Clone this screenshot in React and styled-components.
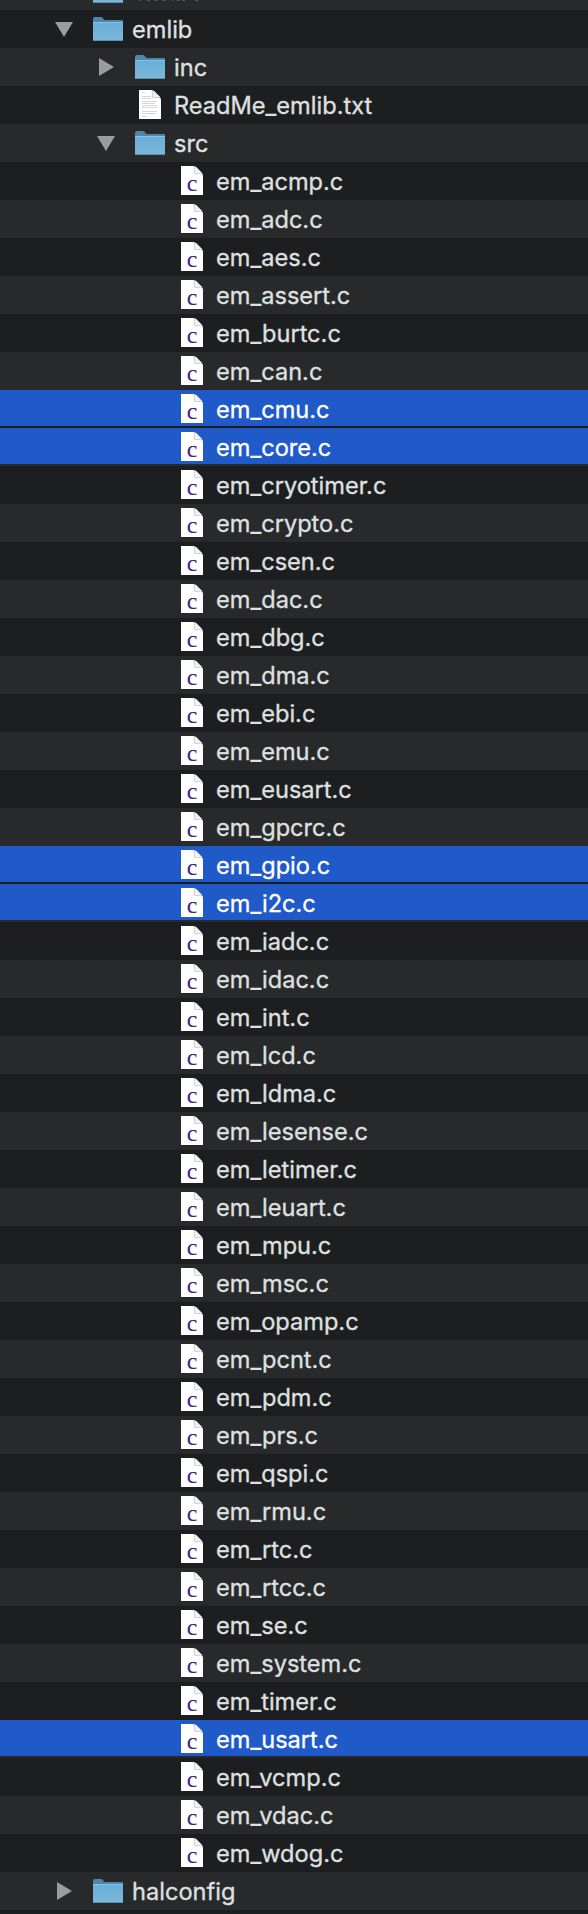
import React from 'react';
import styled, { createGlobalStyle } from 'styled-components';

const Global = createGlobalStyle`
  html, body { margin: 0; background: #1d1e20; }
`;
const Tree = styled.main`
  width: 588px;
  height: 1914px;
  overflow: hidden;
  display: flex;
  flex-direction: column;
  background: #1d1e20;
  font: 400 23.6px/36px Inter, sans-serif;
  color: #dfe0e0;
`;
const Row = styled.div`
  flex: none;
  display: flex;
  align-items: center;
  box-sizing: border-box;
  height: 38px;
  padding-left: ${p => 48 + p.$depth * 42}px;
  border-bottom: 2px solid ${p => (p.$alt ? '#28292b' : '#1d1e20')};
  background: ${p => (p.$selected ? '#1f5ac8' : p.$alt ? '#28292b' : '#1d1e20')};
  color: ${p => (p.$selected ? '#ffffff' : '#dfe0e0')};
`;
const TopSliver = styled.div`
  flex: none;
  height: 10px;
  overflow: hidden;
  display: flex;
  flex-direction: column;
  justify-content: flex-end;
  background: #28292b;
`;
const Disclosure = styled.span`
  width: 34px;
  height: 36px;
  flex: none;
  display: flex;
`;
const IconSlot = styled.span`
  width: 52px;
  height: 36px;
  flex: none;
  display: flex;
  justify-content: center;
  margin-right: -2px;
`;
const Name = styled.span`
  white-space: pre;
  padding-top: 3px;
  -webkit-text-stroke: 0.3px currentColor;
`;

const Triangle = ({ open }) => (
  <svg width="32" height="36" viewBox="0 0 32 36">
    <path d={open ? 'M7 12H25L16 27Z' : 'M9 10V28L24 19Z'} fill="#9b9c9c" />
  </svg>
);
const Folder = () => (
  <svg width="32" height="36" viewBox="0 0 32 36">
    <defs>
      <linearGradient id="front" x1="0" y1="0" x2="0" y2="1">
        <stop offset="0" stopColor="#68aed8" />
        <stop offset="1" stopColor="#7cb8d9" />
      </linearGradient>
    </defs>
    <path d="M1 9Q1 7 3 7H9Q10.500 7 11.500 9L12.500 10H30Q31 10 31 11V20H1Z" fill="#4f86a8" />
    <path d="M1 12H31V30Q31 31 30 31H2Q1 31 1 30Z" fill="url(#front)" />
    <path d="M1 12.500H31" stroke="#83c4e8" />
    <path d="M1.300 30.500H30.700" stroke="#5a92b2" />
  </svg>
);
const Page = ({ code }) => (
  <svg width="24" height="36" viewBox="0 0 24 36">
    <path d="M1 4H13Q15 4 16.500 5.500L21.500 10.500Q23 12 23 14V33H1Z" fill="#fff" />
    <path d="M14.500 4.500V11.500H22.300L16 5Z" fill="#f2f2f2" />
    <path d="M14.500 5V11.500H22" fill="none" stroke="#c9c9c9" strokeWidth=".8" />
    {code ? (
      <text x="12" y="29.200" textAnchor="middle" fontFamily="Liberation Serif, serif" fontSize="24" fill="#3f2382">c</text>
    ) : (
      <path d="M4 6.500H7M4 10.500H13M4 12.500H13M4 15.500H19M4 17.500H17M4 19.500H19M4 21.500H19M4 25.500H19M4 27.500H18M4 30.500H9" stroke="#cccccc" strokeWidth=".8" />
    )}
  </svg>
);

const files = ['acmp','adc','aes','assert','burtc','can','cmu','core','cryotimer','crypto','csen','dac','dbg','dma','ebi','emu','eusart','gpcrc','gpio','i2c','iadc','idac','int','lcd','ldma','lesense','letimer','leuart','mpu','msc','opamp','pcnt','pdm','prs','qspi','rmu','rtc','rtcc','se','system','timer','usart','vcmp','vdac','wdog'];
const chosen = new Set(['cmu', 'core', 'gpio', 'i2c', 'usart']);
const rows = [
  { name: 'emlib', kind: 'folder', depth: 0, open: true },
  { name: 'inc', kind: 'folder', depth: 1, open: false },
  { name: 'ReadMe_emlib.txt', kind: 'text', depth: 1 },
  { name: 'src', kind: 'folder', depth: 1, open: true },
  ...files.map(f => ({ name: `em_${f}.c`, kind: 'code', depth: 2, selected: chosen.has(f) })),
  { name: 'halconfig', kind: 'folder', depth: 0, open: false },
];

const Entry = ({ item, alt }) => (
  <Row $depth={item.depth} $alt={alt} $selected={item.selected}>
    <Disclosure>{item.kind === 'folder' && <Triangle open={item.open} />}</Disclosure>
    <IconSlot>{item.kind === 'folder' ? <Folder /> : <Page code={item.kind === 'code'} />}</IconSlot>
    <Name>{item.name}</Name>
  </Row>
);

export default function App() {
  return (
    <>
      <Global />
      <Tree>
        <TopSliver>
          <Entry alt item={{ name: 'emdrv', kind: 'folder', depth: 0, open: false }} />
        </TopSliver>
        {rows.map((item, i) => <Entry key={item.name} item={item} alt={i % 2 === 1} />)}
      </Tree>
    </>
  );
}
